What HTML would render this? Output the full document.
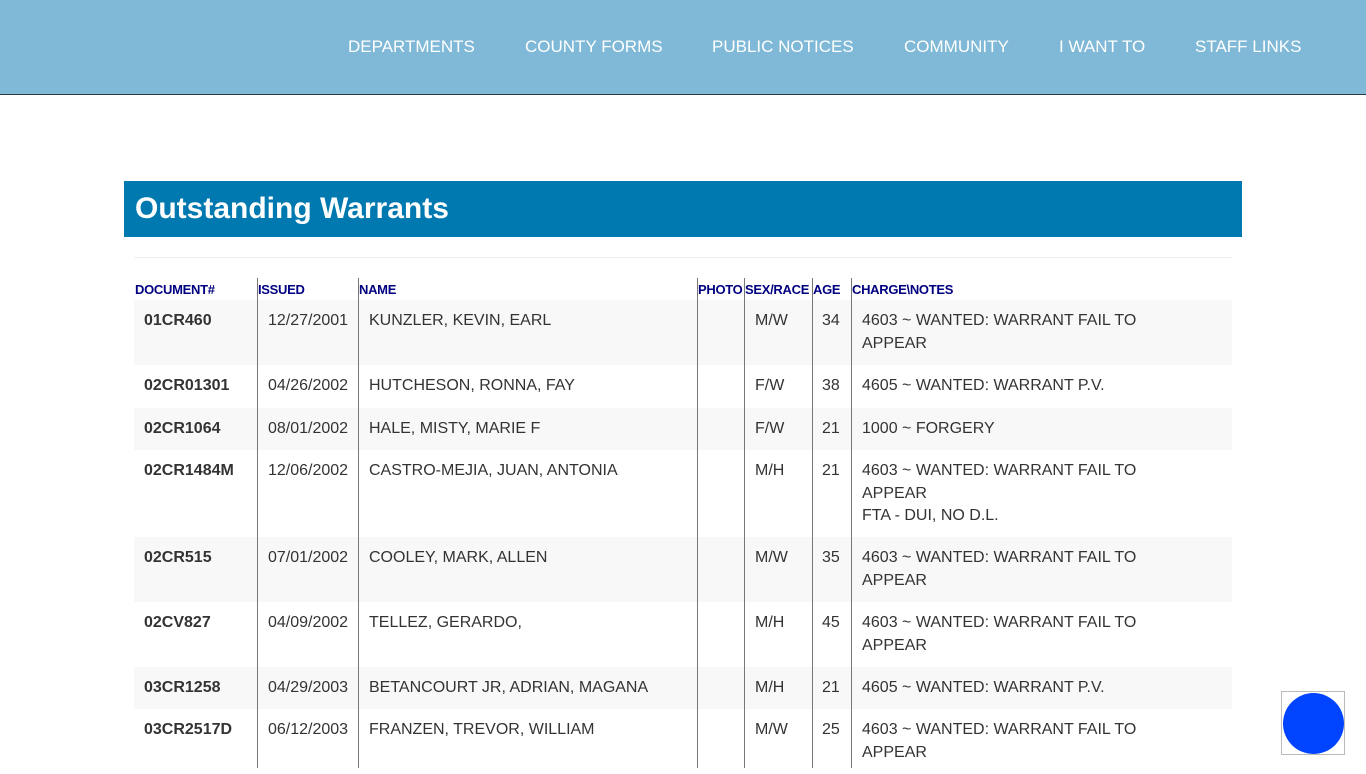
<!DOCTYPE html>
<html><head><meta charset="utf-8"><style>
*{margin:0;padding:0;box-sizing:border-box}
body{width:1366px;height:768px;overflow:hidden;background:#fff;font-family:"Liberation Sans",Arial,sans-serif;position:relative}
.hdr{position:absolute;left:0;top:0;width:1366px;height:95px;background:#7fb9d7;border-bottom:1px solid #2a3a40}
.nav{position:absolute;top:37px;color:#fff;font-size:17px;white-space:nowrap}
.title{position:absolute;left:124px;top:181px;width:1118px;height:56px;background:#0079b0;color:#fff;font-weight:bold;font-size:30px;padding:11px 0 0 11px}
.hr{position:absolute;left:134px;top:257px;width:1098px;height:1px;background:#eee}
.th{position:absolute;top:282px;font-size:13px;font-weight:bold;color:#000080;letter-spacing:-0.3px}
.row{position:absolute;left:134px;width:1098px}
.row.s{background:#f8f8f8}
.c{position:absolute;top:10px;font-size:16px;line-height:22.5px;color:#333}
.b{font-weight:bold}
.vl{position:absolute;top:278px;width:1px;height:490px;background:#777}
.badge{position:absolute;left:1281px;top:691px;width:64px;height:64px;border:1px solid #bbb}
.badge div{position:absolute;left:1px;top:1px;width:61px;height:61px;border-radius:50%;background:#0044ff}
</style></head><body>
<div class="hdr">
<span class="nav" style="left:348px">DEPARTMENTS</span>
<span class="nav" style="left:525px">COUNTY FORMS</span>
<span class="nav" style="left:712px">PUBLIC NOTICES</span>
<span class="nav" style="left:904px">COMMUNITY</span>
<span class="nav" style="left:1059px">I WANT TO</span>
<span class="nav" style="left:1195px">STAFF LINKS</span>
</div>
<div class="title">Outstanding Warrants</div>
<div class="hr"></div>
<span class="th" style="left:135px">DOCUMENT#</span>
<span class="th" style="left:258px">ISSUED</span>
<span class="th" style="left:359px">NAME</span>
<span class="th" style="left:698px">PHOTO</span>
<span class="th" style="left:745px">SEX/RACE</span>
<span class="th" style="left:813px">AGE</span>
<span class="th" style="left:852px">CHARGE\NOTES</span>

<div class="row s" style="top:300px;height:65px"><span class="c b" style="left:10px">01CR460</span><span class="c" style="left:134px">12/27/2001</span><span class="c" style="left:235px">KUNZLER, KEVIN, EARL</span><span class="c" style="left:621px">M/W</span><span class="c" style="left:688px">34</span><span class="c" style="left:728px">4603 ~ WANTED: WARRANT FAIL TO<br>APPEAR</span></div>
<div class="row" style="top:365px;height:43px"><span class="c b" style="left:10px">02CR01301</span><span class="c" style="left:134px">04/26/2002</span><span class="c" style="left:235px">HUTCHESON, RONNA, FAY</span><span class="c" style="left:621px">F/W</span><span class="c" style="left:688px">38</span><span class="c" style="left:728px">4605 ~ WANTED: WARRANT P.V.</span></div>
<div class="row s" style="top:408px;height:42px"><span class="c b" style="left:10px">02CR1064</span><span class="c" style="left:134px">08/01/2002</span><span class="c" style="left:235px">HALE, MISTY, MARIE F</span><span class="c" style="left:621px">F/W</span><span class="c" style="left:688px">21</span><span class="c" style="left:728px">1000 ~ FORGERY</span></div>
<div class="row" style="top:450px;height:87px"><span class="c b" style="left:10px">02CR1484M</span><span class="c" style="left:134px">12/06/2002</span><span class="c" style="left:235px">CASTRO-MEJIA, JUAN, ANTONIA</span><span class="c" style="left:621px">M/H</span><span class="c" style="left:688px">21</span><span class="c" style="left:728px">4603 ~ WANTED: WARRANT FAIL TO<br>APPEAR<br>FTA - DUI, NO D.L.</span></div>
<div class="row s" style="top:537px;height:65px"><span class="c b" style="left:10px">02CR515</span><span class="c" style="left:134px">07/01/2002</span><span class="c" style="left:235px">COOLEY, MARK, ALLEN</span><span class="c" style="left:621px">M/W</span><span class="c" style="left:688px">35</span><span class="c" style="left:728px">4603 ~ WANTED: WARRANT FAIL TO<br>APPEAR</span></div>
<div class="row" style="top:602px;height:65px"><span class="c b" style="left:10px">02CV827</span><span class="c" style="left:134px">04/09/2002</span><span class="c" style="left:235px">TELLEZ, GERARDO,</span><span class="c" style="left:621px">M/H</span><span class="c" style="left:688px">45</span><span class="c" style="left:728px">4603 ~ WANTED: WARRANT FAIL TO<br>APPEAR</span></div>
<div class="row s" style="top:667px;height:42px"><span class="c b" style="left:10px">03CR1258</span><span class="c" style="left:134px">04/29/2003</span><span class="c" style="left:235px">BETANCOURT JR, ADRIAN, MAGANA</span><span class="c" style="left:621px">M/H</span><span class="c" style="left:688px">21</span><span class="c" style="left:728px">4605 ~ WANTED: WARRANT P.V.</span></div>
<div class="row" style="top:709px;height:65px"><span class="c b" style="left:10px">03CR2517D</span><span class="c" style="left:134px">06/12/2003</span><span class="c" style="left:235px">FRANZEN, TREVOR, WILLIAM</span><span class="c" style="left:621px">M/W</span><span class="c" style="left:688px">25</span><span class="c" style="left:728px">4603 ~ WANTED: WARRANT FAIL TO<br>APPEAR</span></div>

<div class="vl" style="left:257px"></div>
<div class="vl" style="left:358px"></div>
<div class="vl" style="left:697px"></div>
<div class="vl" style="left:744px"></div>
<div class="vl" style="left:812px"></div>
<div class="vl" style="left:851px"></div>
<div class="badge"><div></div></div>
</body></html>
